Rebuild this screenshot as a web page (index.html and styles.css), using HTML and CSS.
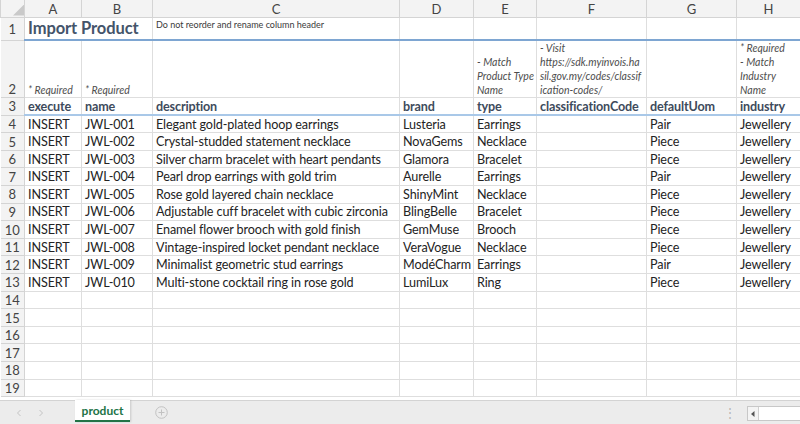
FILE: index.html
```html
<!DOCTYPE html>
<html lang="en">
<head>
  <meta charset="UTF-8">
  <meta name="viewport" content="width=device-width, initial-scale=1.0">
  <title>Import Product</title>
  <link rel="stylesheet" href="styles.css">
</head>
<body>
  <div class="excel">
    <div class="grid-area">
      <table class="sheet">
        <colgroup>
          <col class="c-rh"><col class="c-a"><col class="c-b"><col class="c-c"><col class="c-d">
          <col class="c-e"><col class="c-f"><col class="c-g"><col class="c-h">
        </colgroup>
        <tr class="colhead">
          <th class="corner"><div class="tri"></div></th>
          <th>A</th><th>B</th><th>C</th><th>D</th><th>E</th><th>F</th><th>G</th><th>H</th>
        </tr>
        <tr class="r1">
          <th class="rh">1</th>
          <td colspan="2" class="title">Import Product</td>
          <td class="note">Do not reorder and rename column header</td>
          <td></td><td></td><td></td><td></td><td></td>
        </tr>
        <tr class="r2">
          <th class="rh">2</th>
          <td>* Required</td>
          <td>* Required</td>
          <td></td>
          <td></td>
          <td>- Match<br>Product Type<br>Name</td>
          <td>- Visit<br>https://sdk.myinvois.ha<br>sil.gov.my/codes/classif<br>ication-codes/</td>
          <td></td>
          <td>* Required<br>- Match<br>Industry<br>Name</td>
        </tr>
        <tr class="r3">
          <th class="rh">3</th>
          <td>execute</td><td>name</td><td>description</td><td>brand</td><td>type</td>
          <td>classificationCode</td><td>defaultUom</td><td>industry</td>
        </tr>
        <tr><th class="rh">4</th><td>INSERT</td><td>JWL-001</td><td>Elegant gold-plated hoop earrings</td><td>Lusteria</td><td>Earrings</td><td></td><td>Pair</td><td>Jewellery</td></tr>
        <tr><th class="rh">5</th><td>INSERT</td><td>JWL-002</td><td>Crystal-studded statement necklace</td><td>NovaGems</td><td>Necklace</td><td></td><td>Piece</td><td>Jewellery</td></tr>
        <tr><th class="rh">6</th><td>INSERT</td><td>JWL-003</td><td>Silver charm bracelet with heart pendants</td><td>Glamora</td><td>Bracelet</td><td></td><td>Piece</td><td>Jewellery</td></tr>
        <tr><th class="rh">7</th><td>INSERT</td><td>JWL-004</td><td>Pearl drop earrings with gold trim</td><td>Aurelle</td><td>Earrings</td><td></td><td>Pair</td><td>Jewellery</td></tr>
        <tr><th class="rh">8</th><td>INSERT</td><td>JWL-005</td><td>Rose gold layered chain necklace</td><td>ShinyMint</td><td>Necklace</td><td></td><td>Piece</td><td>Jewellery</td></tr>
        <tr><th class="rh">9</th><td>INSERT</td><td>JWL-006</td><td>Adjustable cuff bracelet with cubic zirconia</td><td>BlingBelle</td><td>Bracelet</td><td></td><td>Piece</td><td>Jewellery</td></tr>
        <tr><th class="rh">10</th><td>INSERT</td><td>JWL-007</td><td>Enamel flower brooch with gold finish</td><td>GemMuse</td><td>Brooch</td><td></td><td>Piece</td><td>Jewellery</td></tr>
        <tr><th class="rh">11</th><td>INSERT</td><td>JWL-008</td><td>Vintage-inspired locket pendant necklace</td><td>VeraVogue</td><td>Necklace</td><td></td><td>Piece</td><td>Jewellery</td></tr>
        <tr><th class="rh">12</th><td>INSERT</td><td>JWL-009</td><td>Minimalist geometric stud earrings</td><td>ModéCharm</td><td>Earrings</td><td></td><td>Pair</td><td>Jewellery</td></tr>
        <tr><th class="rh">13</th><td>INSERT</td><td>JWL-010</td><td>Multi-stone cocktail ring in rose gold</td><td>LumiLux</td><td>Ring</td><td></td><td>Piece</td><td>Jewellery</td></tr>
        <tr><th class="rh">14</th><td></td><td></td><td></td><td></td><td></td><td></td><td></td><td></td></tr>
        <tr><th class="rh">15</th><td></td><td></td><td></td><td></td><td></td><td></td><td></td><td></td></tr>
        <tr><th class="rh">16</th><td></td><td></td><td></td><td></td><td></td><td></td><td></td><td></td></tr>
        <tr><th class="rh">17</th><td></td><td></td><td></td><td></td><td></td><td></td><td></td><td></td></tr>
        <tr><th class="rh">18</th><td></td><td></td><td></td><td></td><td></td><td></td><td></td><td></td></tr>
        <tr><th class="rh">19</th><td></td><td></td><td></td><td></td><td></td><td></td><td></td><td></td></tr>
      </table>
    </div>

    <div class="tabbar">
      <div class="nav">
        <svg width="6" height="8" viewBox="0 0 6 8"><path d="M4.5 1 L1.5 4 L4.5 7" fill="none" stroke="#c4c4c4" stroke-width="1"/></svg>
        <svg width="6" height="8" viewBox="0 0 6 8"><path d="M1.5 1 L4.5 4 L1.5 7" fill="none" stroke="#c4c4c4" stroke-width="1"/></svg>
      </div>
      <div class="tab">product</div>
      <div class="add">
        <svg width="13" height="13" viewBox="0 0 13 13"><circle cx="6.5" cy="6.5" r="5.8" fill="none" stroke="#c2c2c2"/><path d="M6.5 3.5 V9.5 M3.5 6.5 H9.5" stroke="#c2c2c2"/></svg>
      </div>
      <div class="spacer"></div>
      <div class="dots">⋮</div>
      <div class="hscroll">
        <div class="arrow">
          <svg width="4" height="6" viewBox="0 0 4 6"><path d="M3.5 0 V6 L0 3 Z" fill="#555"/></svg>
        </div>
        <div class="track"></div>
      </div>
    </div>
  </div>
</body>
</html>
```

FILE: styles.css
```css
body {
  margin: 0;
  background: #fff;
  font-family: Lato, "Liberation Sans", sans-serif;
}
.excel {
  width: 800px;
  height: 424px;
  display: flex;
  flex-direction: column;
  overflow: hidden;
}
.grid-area {
  flex: 1;
  overflow: hidden;
}
.sheet {
  border-collapse: collapse;
  table-layout: fixed;
  width: 800px;
  font-size: 12.6px;
  letter-spacing: -0.1px;
  color: #232323;
}
.c-rh { width: 24px; }
.c-a { width: 57px; }
.c-b { width: 71px; }
.c-c { width: 247px; }
.c-d { width: 74px; }
.c-e { width: 63px; }
.c-f { width: 110px; }
.c-g { width: 90px; }
.c-h { width: 64px; }
.sheet td, .sheet th {
  border: 1px solid #dedede;
  padding: 0 3px;
  white-space: nowrap;
  overflow: hidden;
  text-align: left;
  font-weight: normal;
}
.sheet tr { height: 17.6px; }

/* column letters */
.colhead { height: 16px; }
.colhead th {
  background: #f3f3f3;
  color: #444;
  text-align: center;
  font-size: 13px;
  letter-spacing: 0;
  border-color: #d4d4d4;
  border-top: none;
  padding: 0;
}
.corner { padding: 0; }
.corner .tri {
  margin-left: auto;
  margin-top: 3px;
  width: 11px;
  height: 11px;
  background: #c9c9c9;
  clip-path: polygon(100% 0, 100% 100%, 0 100%);
}
.sheet .rh {
  background: #f3f3f3;
  color: #444;
  text-align: center;
  padding: 0;
  border-left: none;
  border-color: #d4d4d4;
  font-size: 13px;
  letter-spacing: 0;
}

/* row 1 */
.r1 { height: 23px; }
.r1 td { border-bottom: 2px solid #7ea6d2; }
.r1 .title {
  font-size: 16.5px;
  font-weight: bold;
  color: #44546a;
  vertical-align: bottom;
  padding-bottom: 1px;
}
.r1 .note {
  font-size: 9px;
  letter-spacing: 0;
  color: #3a3a3a;
  vertical-align: top;
  padding-top: 1px;
}

/* row 2 notes */
.r2 { height: 58px; }
.r2 th { vertical-align: bottom; }
.r2 td {
  vertical-align: bottom;
  font-size: 10.5px;
  font-style: italic;
  letter-spacing: 0;
  line-height: 14px;
  color: #4d4d4d;
  white-space: nowrap;
}

/* row 3 headers */
.r3 { height: 19px; }
.r3 td {
  font-weight: bold;
  color: #3e4b5c;
  font-size: 12.6px;
  letter-spacing: -0.15px;
  border-bottom: 2px solid #a9c8e8;
}

/* sheet tabs */
.tabbar {
  height: 23px;
  flex-shrink: 0;
  display: flex;
  align-items: stretch;
  background: #ececec;
  border-top: 1px solid #d3d3d3;
}
.nav {
  width: 65px;
  display: flex;
  align-items: center;
  justify-content: center;
  gap: 16px;
  padding-right: 6px;
  box-sizing: border-box;
}
.tab {
  margin-left: 10px;
  width: 55px;
  margin-top: -1px;
  margin-bottom: 2px;
  background: #fff;
  color: #217346;
  font-weight: bold;
  font-size: 12px;
  display: flex;
  align-items: center;
  justify-content: center;
  border-bottom: 2px solid #217346;
  box-shadow: 1px 0 2px rgba(0, 0, 0, 0.15);
}
.add {
  width: 62px;
  display: flex;
  align-items: center;
  justify-content: center;
}
.spacer { flex: 1; }
.dots {
  color: #b5b5b5;
  font-size: 12px;
  display: flex;
  align-items: center;
  padding-right: 11px;
}
.hscroll {
  width: 52px;
  display: flex;
  margin: 5px 0 3px 0;
  border: 1px solid #c8c8c8;
  border-right: none;
  background: #fff;
}
.hscroll .arrow {
  width: 10px;
  display: flex;
  align-items: center;
  justify-content: center;
  border-right: 1px solid #d0d0d0;
  background: #f4f4f4;
}
.hscroll .track { flex: 1; }
```
